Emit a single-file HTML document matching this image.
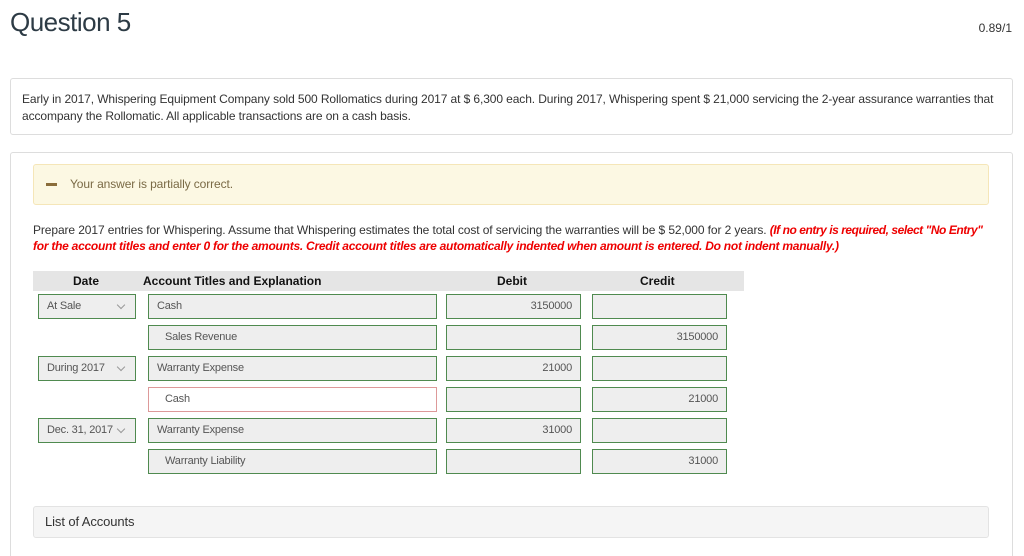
<!DOCTYPE html>
<html><head><style>
html,body{margin:0;width:1024px;height:556px;overflow:hidden}
body{background:#fff;font-family:"Liberation Sans",sans-serif;color:#2d3b45;position:relative}
.a{position:absolute;white-space:nowrap}
.box{position:absolute;border:1px solid #ddd;border-radius:3px;box-sizing:border-box}
.f{position:absolute;box-sizing:border-box;height:25px;border:1px solid #4f8a4f;background:#eee;font-size:11px;line-height:23px;color:#555;padding:0 8px;letter-spacing:-0.2px}
.r{text-align:right}
.sel:after{content:"";position:absolute;right:11px;top:7px;width:5px;height:5px;border-right:1px solid #999;border-bottom:1px solid #999;transform:rotate(45deg)}
.t{font-size:12px;letter-spacing:-0.1px;color:#333}
</style></head><body>
<div class="a" style="left:10px;top:7px;font-size:26px;color:#2d3b45;letter-spacing:-0.5px">Question 5</div>
<div class="a" style="right:12px;top:21px;font-size:12px;color:#333">0.89/1</div>
<div class="box" style="left:10px;top:78px;width:1003px;height:57px"></div>
<div class="a t" style="left:22px;top:91px;line-height:17px">Early in 2017, Whispering Equipment Company sold 500 Rollomatics during 2017 at $ 6,300 each. During 2017, Whispering spent $ 21,000 servicing the 2-year assurance warranties that<br>accompany the Rollomatic. All applicable transactions are on a cash basis.</div>
<div class="box" style="left:10px;top:152px;width:1003px;height:420px"></div>
<div class="box" style="left:33px;top:164px;width:956px;height:41px;background:#fcf8e3;border-color:#f5e6b8"></div>
<div class="a" style="left:46px;top:183px;width:11px;height:3px;background:#8a6d3b"></div>
<div class="a" style="left:70px;top:177px;font-size:12px;color:#7a6a45;letter-spacing:-0.1px">Your answer is partially correct.</div>
<div class="a t" style="left:33px;top:222px;line-height:16px">Prepare 2017 entries for Whispering. Assume that Whispering estimates the total cost of servicing the warranties will be $ 52,000 for 2 years. <b style="color:#e00;font-style:italic;letter-spacing:-0.45px">(If no entry is required, select "No Entry"</b><br><b style="color:#e00;font-style:italic;letter-spacing:-0.25px">for the account titles and enter 0 for the amounts. Credit account titles are automatically indented when amount is entered. Do not indent manually.)</b></div>
<div class="a" style="left:33px;top:271px;width:711px;height:20px;background:#e5e5e5"></div>
<div class="a" style="left:73px;top:274px;font-size:12px;font-weight:bold;color:#111">Date</div>
<div class="a" style="left:143px;top:274px;font-size:12px;font-weight:bold;color:#111">Account Titles and Explanation</div>
<div class="a" style="left:497px;top:274px;font-size:12px;font-weight:bold;color:#111">Debit</div>
<div class="a" style="left:640px;top:274px;font-size:12px;font-weight:bold;color:#111">Credit</div>

<div class="f sel" style="left:38px;top:294px;width:98px">At Sale</div>
<div class="f" style="left:148px;top:294px;width:289px">Cash</div>
<div class="f r" style="left:446px;top:294px;width:135px">3150000</div>
<div class="f" style="left:592px;top:294px;width:135px"></div>

<div class="f" style="left:148px;top:325px;width:289px;padding-left:16px">Sales Revenue</div>
<div class="f" style="left:446px;top:325px;width:135px"></div>
<div class="f r" style="left:592px;top:325px;width:135px">3150000</div>

<div class="f sel" style="left:38px;top:356px;width:98px">During 2017</div>
<div class="f" style="left:148px;top:356px;width:289px">Warranty Expense</div>
<div class="f r" style="left:446px;top:356px;width:135px">21000</div>
<div class="f" style="left:592px;top:356px;width:135px"></div>

<div class="f" style="left:148px;top:387px;width:289px;padding-left:16px;background:#fff;border-color:#d99">Cash</div>
<div class="f" style="left:446px;top:387px;width:135px"></div>
<div class="f r" style="left:592px;top:387px;width:135px">21000</div>

<div class="f sel" style="left:38px;top:418px;width:98px">Dec. 31, 2017</div>
<div class="f" style="left:148px;top:418px;width:289px">Warranty Expense</div>
<div class="f r" style="left:446px;top:418px;width:135px">31000</div>
<div class="f" style="left:592px;top:418px;width:135px"></div>

<div class="f" style="left:148px;top:449px;width:289px;padding-left:16px">Warranty Liability</div>
<div class="f" style="left:446px;top:449px;width:135px"></div>
<div class="f r" style="left:592px;top:449px;width:135px">31000</div>

<div class="box" style="left:33px;top:506px;width:956px;height:32px;background:#f5f5f5;border-color:#e3e3e3"></div>
<div class="a" style="left:45px;top:514px;font-size:13px;color:#333;letter-spacing:-0.1px">List of Accounts</div>
</body></html>
